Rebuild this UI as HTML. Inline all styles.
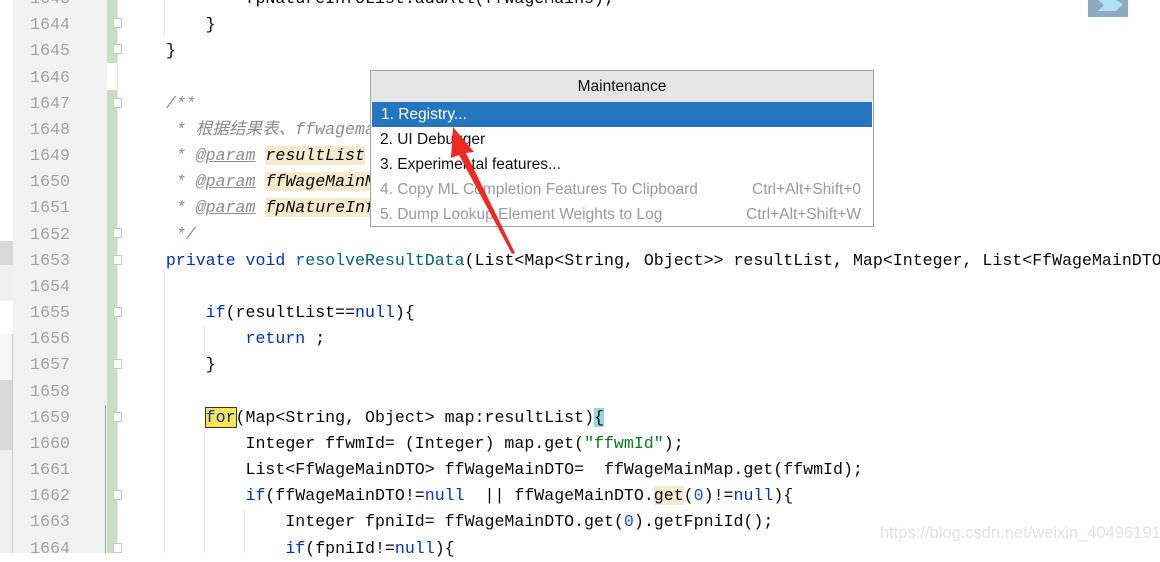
<!DOCTYPE html>
<html><head><meta charset="utf-8">
<style>
html,body{margin:0;padding:0;}
body{width:1160px;height:553px;overflow:hidden;background:#fff;position:relative;font-family:"Liberation Mono","Noto Sans CJK SC",monospace;}
.abs{position:absolute;}
.ln{position:absolute;left:13px;width:57px;text-align:right;color:#a3a3a3;font-size:16.6px;line-height:26.2px;margin-top:2px;}
.cl{position:absolute;left:126px;white-space:pre;font-size:16.6px;line-height:26.2px;color:#080808;margin-top:2px;}
.k{color:#0033b3}
.m{color:#00627a}
.c{color:#8c8c8c;font-style:italic}
.tg{color:#8c8c8c;font-style:italic;text-decoration:underline}
.pm{background:#f5eacb;color:#080808;font-style:italic}
.s{color:#067d17}
.n{color:#1750eb}
.fold{position:absolute;left:113px;width:9px;height:10px;border:1px solid #c9c9c9;background:#fff;box-sizing:border-box;}
.menu{position:absolute;left:370px;top:70px;width:504px;height:157px;border:1px solid #a0a0a0;box-sizing:border-box;background:#fff;font-family:"Liberation Sans","Noto Sans CJK SC",sans-serif;font-size:15.5px;}
.menu .hd{height:31px;background:#e6e6e6;text-align:center;line-height:31px;color:#111;}
.menu .it{height:25px;line-height:25px;padding-left:9px;position:relative;color:#111;}
.menu .dis{color:#9a9a9a}
.menu .sc{position:absolute;right:12px;top:0;}
</style></head><body>
<div class="abs" style="left:0;top:241px;width:13px;height:24px;background:#d8d8d8"></div>
<div class="abs" style="left:0;top:265px;width:13px;height:36px;background:#f0f0f0"></div>
<div class="abs" style="left:0;top:334px;width:12px;height:47px;background:#f6f6f6;border-right:1px solid #ccc"></div>
<div class="abs" style="left:0;top:380px;width:12px;height:70px;background:#d9d9d9;border-right:1px solid #ccc"></div>
<div class="abs" style="left:0;top:450px;width:12px;height:103px;background:#f0f0f0;border-right:1px solid #ccc"></div>
<div class="abs" style="left:13px;top:0;width:94px;height:553px;background:#f2f2f2"></div>
<div class="abs" style="left:107px;top:0;width:10px;height:63px;background:#c9dfc2"></div>
<div class="abs" style="left:107px;top:90px;width:10px;height:463px;background:#c9dfc2"></div>
<div class="abs" style="left:105px;top:405px;width:1px;height:148px;background:#8aa"></div>
<div class="abs" style="left:117px;top:0;width:1px;height:553px;background:#e8e8e8"></div>
<div class="abs" style="left:164px;top:0;width:1px;height:36px;background:#e4e4e4"></div>
<div class="abs" style="left:164px;top:270px;width:1px;height:283px;background:#e4e4e4"></div>
<div class="abs" style="left:204px;top:326px;width:1px;height:26px;background:#e4e4e4"></div>
<div class="abs" style="left:204px;top:432px;width:1px;height:121px;background:#e4e4e4"></div>
<div class="abs" style="left:244px;top:510px;width:1px;height:43px;background:#e4e4e4"></div>

<div class="ln" style="top:-16px">1643</div>
<div class="ln" style="top:10px">1644</div>
<div class="ln" style="top:36px">1645</div>
<div class="ln" style="top:63px">1646</div>
<div class="ln" style="top:89px">1647</div>
<div class="ln" style="top:115px">1648</div>
<div class="ln" style="top:141px">1649</div>
<div class="ln" style="top:167px">1650</div>
<div class="ln" style="top:193px">1651</div>
<div class="ln" style="top:220px">1652</div>
<div class="ln" style="top:246px">1653</div>
<div class="ln" style="top:272px">1654</div>
<div class="ln" style="top:298px">1655</div>
<div class="ln" style="top:324px">1656</div>
<div class="ln" style="top:350px">1657</div>
<div class="ln" style="top:377px">1658</div>
<div class="ln" style="top:403px">1659</div>
<div class="ln" style="top:429px">1660</div>
<div class="ln" style="top:455px">1661</div>
<div class="ln" style="top:481px">1662</div>
<div class="ln" style="top:507px">1663</div>
<div class="ln" style="top:534px">1664</div>

<div class="fold" style="top:18px"></div>
<div class="fold" style="top:44px"></div>
<div class="fold" style="top:98px"></div>
<div class="fold" style="top:228px"></div>
<div class="fold" style="top:255px"></div>
<div class="fold" style="top:307px"></div>
<div class="fold" style="top:359px"></div>
<div class="fold" style="top:412px"></div>
<div class="fold" style="top:490px"></div>
<div class="fold" style="top:543px"></div>

<div class="cl" style="top:-16px">            fpNatureInfoList.addAll(ffWageMains);</div>
<div class="cl" style="top:10px">        }</div>
<div class="cl" style="top:36px">    }</div>
<div class="cl" style="top:89px"><span class="c">    /**</span></div>
<div class="cl" style="top:115px"><span class="c">     * 根据结果表、ffwagemain</span></div>
<div class="cl" style="top:141px"><span class="c">     * </span><span class="tg">@param</span> <span class="pm">resultList</span></div>
<div class="cl" style="top:167px"><span class="c">     * </span><span class="tg">@param</span> <span class="pm">ffWageMainMap</span></div>
<div class="cl" style="top:193px"><span class="c">     * </span><span class="tg">@param</span> <span class="pm">fpNatureInfo</span></div>
<div class="cl" style="top:220px"><span class="c">     */</span></div>
<div class="cl" style="top:246px">    <span class="k">private void</span> <span class="m">resolveResultData</span>(List&lt;Map&lt;String, Object&gt;&gt; resultList, Map&lt;Integer, List&lt;FfWageMainDTO&gt;&gt;</div>
<div class="cl" style="top:298px">        <span class="k">if</span>(resultList==<span class="k">null</span>){</div>
<div class="cl" style="top:324px">            <span class="k">return</span> ;</div>
<div class="cl" style="top:350px">        }</div>
<div class="cl" style="top:403px">        <span class="k" style="background:#fbe54f;outline:1px solid #333">for</span>(Map&lt;String, Object&gt; map:resultList)<span style="background:#93d9d9">{</span></div>
<div class="cl" style="top:429px">            Integer ffwmId= (Integer) map.get(<span class="s">"ffwmId"</span>);</div>
<div class="cl" style="top:455px">            List&lt;FfWageMainDTO&gt; ffWageMainDTO=  ffWageMainMap.get(ffwmId);</div>
<div class="cl" style="top:481px">            <span class="k">if</span>(ffWageMainDTO!=<span class="k">null</span>  || ffWageMainDTO.<span style="background:#f5eacb">get</span>(<span class="n">0</span>)!=<span class="k">null</span>){</div>
<div class="cl" style="top:507px">                Integer fpniId= ffWageMainDTO.get(<span class="n">0</span>).getFpniId();</div>
<div class="cl" style="top:534px">                <span class="k">if</span>(fpniId!=<span class="k">null</span>){</div>

<div class="abs" style="left:1088px;top:0;width:40px;height:17px;background:#8eaabf"></div>
<svg class="abs" style="left:1088px;top:0" width="40" height="17"><polygon points="10,0 28,0 35,4 28,11 10,11 16,5" fill="#aee0f7"/></svg>

<div class="menu">
  <div class="hd">Maintenance</div>
  <div class="it" style="background:#2675bf;color:#fff;margin:0 1px">1. Registry...</div>
  <div class="it">2. UI Debugger</div>
  <div class="it">3. Experimental features...</div>
  <div class="it dis">4. Copy ML Completion Features To Clipboard<span class="sc">Ctrl+Alt+Shift+0</span></div>
  <div class="it dis">5. Dump Lookup Element Weights to Log<span class="sc">Ctrl+Alt+Shift+W</span></div>
</div>

<div class="abs" style="left:880px;top:524px;font-family:'Liberation Sans',sans-serif;font-size:16.5px;color:#e2e2e2">https://blog.csdn.net/weixin_40496191</div>

<svg class="abs" style="left:0;top:0" width="1160" height="553">
  <polygon points="453,127 474,152 466,153 515,253 512,254 459,155 451,158" fill="#ee2a22"/>
</svg>
</body></html>
